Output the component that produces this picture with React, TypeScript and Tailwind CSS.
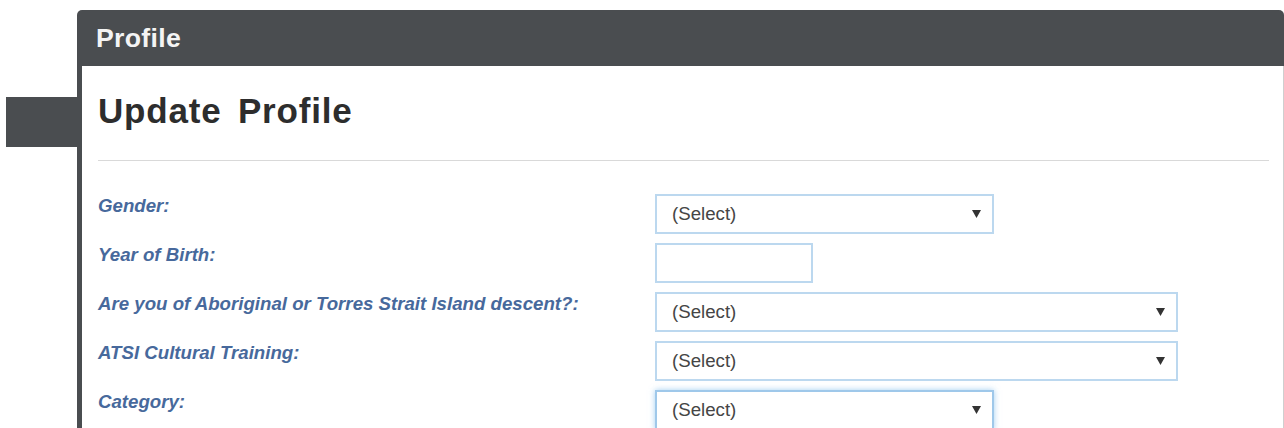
const fields = [
  { label: "Gender:", kind: "select", width: "w-[339px]" },
  { label: "Year of Birth:", kind: "input", width: "w-[158px]" },
  { label: "Are you of Aboriginal or Torres Strait Island descent?:", kind: "select", width: "w-[523px]" },
  { label: "ATSI Cultural Training:", kind: "select", width: "w-[523px]" },
  { label: "Category:", kind: "select", width: "w-[339px]", focused: true },
];

function Caret() {
  return (
    <svg width="9" height="8" viewBox="0 0 9 8" className="shrink-0">
      <polygon points="0,0 9,0 4.5,8" fill="#333" />
    </svg>
  );
}

function Field({ kind, width, focused }: { kind: string; width: string; focused?: boolean }) {
  if (kind === "input") {
    return <div className={`${width} h-[40px] border-2 border-[#bcd8ef] bg-white`} />;
  }
  return (
    <div
      className={
        focused
          ? `${width} h-[40px] border-2 border-[#9fc8ea] bg-white pl-[15px] pr-[11px] flex items-center justify-between shadow-[0_0_6px_rgba(102,175,233,0.6)]`
          : `${width} h-[40px] border-2 border-[#bcd8ef] bg-white pl-[15px] pr-[11px] flex items-center justify-between`
      }
    >
      <span className="text-[18.67px] text-[#454545]">(Select)</span>
      <Caret />
    </div>
  );
}

export default function App() {
  return (
    <div className="flex h-[428px] overflow-hidden bg-white font-['Liberation_Sans',Arial,sans-serif]">
      {/* side tab peeking out behind the panel */}
      <div className="w-[77px] shrink-0 pl-[6px] pt-[97px]">
        <div className="h-[50px] bg-[#4a4d50]" />
      </div>

      <div className="flex-1 pt-[10px] flex flex-col">
        <div className="h-[56px] rounded-t-[5px] bg-[#4a4d50] pl-[19px] text-[26.67px] font-bold leading-[56px] tracking-[0.3px] text-[#f4f4f4]">
          Profile
        </div>

        <div className="flex-1 border-l-[5px] border-r border-l-[#4a4d50] border-r-[#cfcfcf] pl-[16px] pr-[14px]">
          <h2 className="mt-[27px] text-[35px] font-bold leading-[35px] tracking-[0.8px] [word-spacing:6px] text-[#2d2d2d]">
            Update Profile
          </h2>
          <hr className="mt-[32px] border-t border-[#d9d9d9]" />

          <div className="mt-[33px] grid grid-cols-[557px_1fr] gap-y-[9px]">
            {fields.map((f) => (
              <div key={f.label} className="contents">
                <div className="text-[18.67px] leading-6 font-bold italic text-[#47699c]">{f.label}</div>
                <Field kind={f.kind} width={f.width} focused={f.focused} />
              </div>
            ))}
          </div>
        </div>
      </div>
    </div>
  );
}
